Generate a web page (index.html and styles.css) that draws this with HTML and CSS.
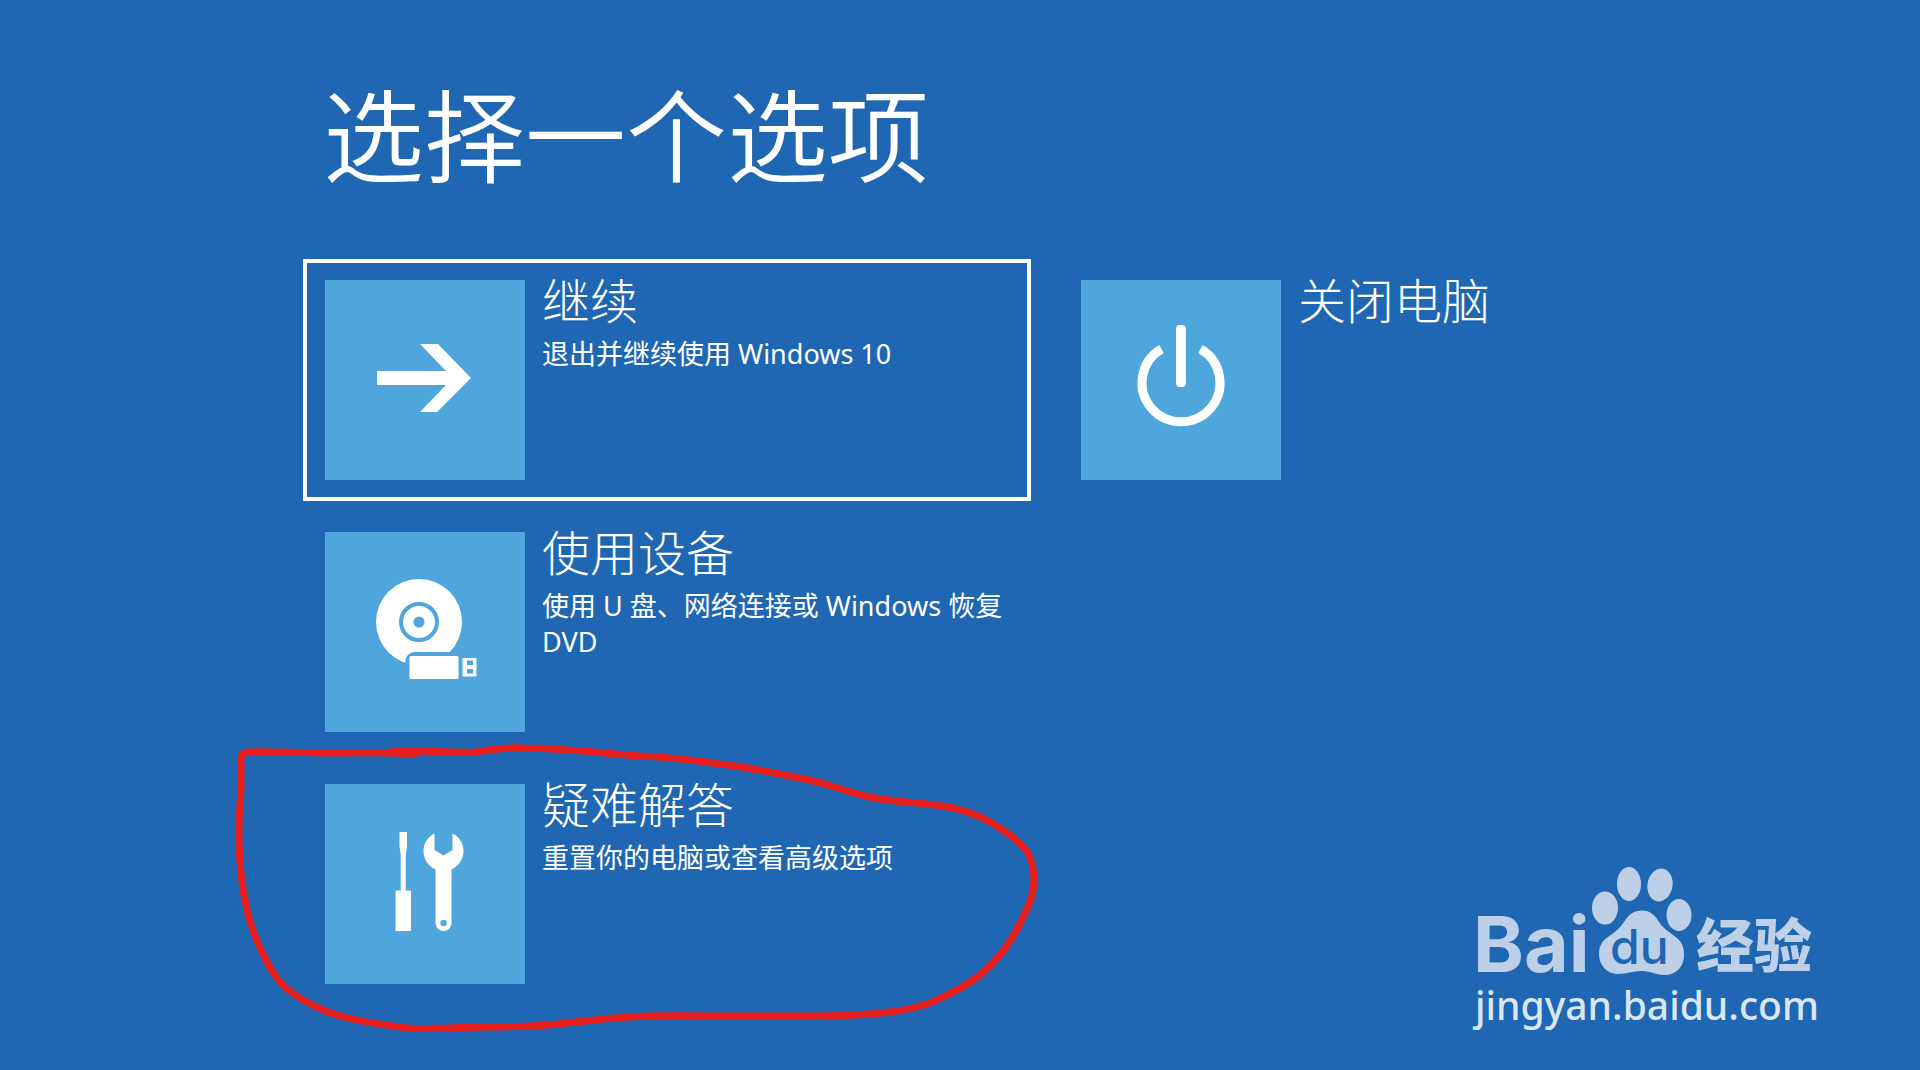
FILE: index.html
```html
<!DOCTYPE html>
<html lang="zh-CN">
<head>
    <meta charset="UTF-8">
    <meta name="viewport" content="width=device-width, initial-scale=1.0">
    <title>选择一个选项</title>
    <link rel="stylesheet" href="styles.css">
</head>
<body>

<main class="container">
    <h1>选择一个选项</h1>

    <div class="options">
        <div class="column">
            <button type="button" class="option selected">
                <svg class="tile" viewBox="0 0 200 200" aria-hidden="true">
                    <path class="shape" d="M52 91H121L95 64H113L146 98L112 132H95L121 105H52Z"/>
                </svg>
                <span class="text">
                    <span class="name">继续</span>
                    <span class="detail">退出并继续使用 Windows 10</span>
                </span>
            </button>

            <button type="button" class="option">
                <svg class="tile" viewBox="0 0 200 200" aria-hidden="true">
                    <circle class="shape" cx="94" cy="90" r="43"/>
                    <circle class="ring" cx="94" cy="90" r="18"/>
                    <circle class="hole" cx="94" cy="90" r="5.5"/>
                    <rect class="hole" x="80.5" y="120" width="70" height="40" rx="9"/>
                    <rect class="shape" x="84.5" y="124" width="49" height="23" rx="1.5"/>
                    <rect class="shape" x="137.5" y="126" width="14" height="18.5" rx="0.5"/>
                    <rect class="hole" x="142" y="128.5" width="6" height="4.5"/>
                    <rect class="hole" x="142" y="137" width="6" height="4.5"/>
                </svg>
                <span class="text">
                    <span class="name">使用设备</span>
                    <span class="detail">使用 U 盘、网络连接或 Windows 恢复 DVD</span>
                </span>
            </button>

            <div class="marked">
                <button type="button" class="option">
                    <svg class="tile" viewBox="0 0 200 200" aria-hidden="true">
                        <path class="shape" d="M74.5 48H82V62L80.7 71V106.5H85Q86 106.5 86 107.5V146Q86 147 85 147H71.5Q70.5 147 70.5 146V107.5Q70.5 106.5 71.5 106.5H75.7V71L74.5 62Z"/>
                        <path class="shape" d="M109.5 49.5V66L118.5 71.5L127.5 66V49.5C134 52.5 138.5 59 138.5 67C138.5 75 134 82 126.5 85.5V139A8 8 0 0 1 110.5 139V85.5C103 82 98.5 75 98.5 67C98.5 59 103 52.5 109.5 49.5Z"/>
                        <circle class="hole" cx="118.5" cy="139" r="3.2"/>
                    </svg>
                    <span class="text">
                        <span class="name">疑难解答</span>
                        <span class="detail">重置你的电脑或查看高级选项</span>
                    </span>
                </button>
                <!-- hand drawn circle around the option -->
                <svg class="marker" viewBox="230 730 820 310" aria-hidden="true">
                    <path d="M415 754C385 752 350 753 330 753C300 753 265 751 248 752Q241 752 241 760C241 772 241 785 241 790C239 810 239 825 239 837C239 862 242 888 247 910C252 932 264 960 277 978C288 993 306 1002 323 1010C347 1020 378 1024 407 1028C420 1029 434 1028 447 1028C480 1026 515 1028 547 1025C575 1023 602 1018 630 1017C655 1015 680 1016 707 1016C740 1016 775 1016 807 1016C832 1016 857 1016 880 1013C905 1011 927 1006 947 995C966 986 980 977 993 963C1005 950 1016 933 1023 917C1029 906 1034 892 1034 880C1034 870 1032 861 1028 853C1019 840 1004 830 990 822C978 815 966 811 953 808C926 802 898 803 870 797C846 792 824 782 800 778C774 773 747 767 720 764C693 760 667 757 640 756C600 753 562 748 523 748C505 747 488 750 475 752C450 753 420 750 393 751"/>
                </svg>
            </div>
        </div>

        <div class="column">
            <button type="button" class="option">
                <svg class="tile" viewBox="0 0 200 200" aria-hidden="true">
                    <path class="power" d="M80.5 69A39 39 0 1 0 119.5 69"/>
                    <rect class="shape" x="95" y="45" width="10" height="62" rx="4"/>
                </svg>
                <span class="text">
                    <span class="name">关闭电脑</span>
                </span>
            </button>
        </div>
    </div>
</main>

<div class="watermark">
    <svg class="logo" viewBox="0 0 350 118">
        <text class="bai" x="3" y="112">Bai</text>
        <ellipse cx="135" cy="48" rx="13" ry="16.5"/>
        <ellipse cx="159" cy="24" rx="12" ry="17"/>
        <ellipse cx="190" cy="25" rx="12.5" ry="16.5" transform="rotate(10 190 25)"/>
        <ellipse cx="209" cy="55" rx="12.5" ry="16"/>
        <path d="M172 50.5C180 50.5 185 55 189 62C194 70 203 74 209 80C213 85 214 89 214 95C214 107 206 115 195 115C186 115 181 111 172 111C163 111 157 114 148 114C137 114 129 105 129 94C129 86 132 81 138 77C145 72 150 68 154 62C159 54 164 50.5 172 50.5Z"/>
        <text class="du" x="140" y="104">du</text>
        <text class="jingyan" x="226" y="107">经验</text>
    </svg>
    <span class="address">jingyan.baidu.com</span>
</div>

</body>
</html>
```

FILE: styles.css
```css
/* Global Styles */
* {
    margin: 0;
    padding: 0;
    box-sizing: border-box;
}

body {
    font-family: 'Noto Sans', 'Noto Sans CJK SC', sans-serif;
    background-color: #1f67b2;
    color: white;
    min-height: 100vh;
    position: relative;
}

.container {
    padding: 71px 100px 0 303px;
}

h1 {
    font-family: 'Noto Sans CJK SC', sans-serif;
    font-size: 101px;
    font-weight: 350;
    line-height: 120px;
    margin: 0 0 68px 20px;
}

/* Options */
.options {
    display: grid;
    grid-template-columns: repeat(2, minmax(0, 728px));
    gap: 28px;
}

.column {
    display: flex;
    flex-direction: column;
    gap: 10px;
}

.option {
    display: flex;
    gap: 17px;
    width: 100%;
    padding: 17px 18px;
    border: 4px solid transparent;
    background: none;
    color: white;
    font-family: inherit;
    text-align: left;
    cursor: pointer;
}

.option.selected {
    border-color: white;
}

.text {
    display: flex;
    flex-direction: column;
    min-width: 0;
}

.name {
    font-family: 'Noto Sans CJK SC', sans-serif;
    font-size: 48px;
    font-weight: 300;
    line-height: 36px;
    margin-bottom: 20px;
}

.detail {
    font-size: 27px;
    line-height: 36px;
}

/* Icons */
.tile {
    width: 200px;
    height: 200px;
    flex-shrink: 0;
    background-color: #4ea6dc;
}

.shape {
    fill: white;
}

.hole {
    fill: #4ea6dc;
}

.ring {
    fill: none;
    stroke: #4ea6dc;
    stroke-width: 4;
}

.power {
    fill: none;
    stroke: white;
    stroke-width: 9;
}

/* Red marker */
.marked {
    position: relative;
}

.marker {
    position: absolute;
    left: -73px;
    top: -33px;
    width: 820px;
    height: 310px;
    pointer-events: none;
}

.marker path {
    fill: none;
    stroke: #e71d1c;
    stroke-width: 7;
    stroke-linecap: round;
    stroke-linejoin: round;
}

/* Watermark */
.watermark {
    position: absolute;
    right: 100px;
    bottom: 38px;
    width: 350px;
}

.logo {
    display: block;
    width: 100%;
    overflow: visible;
    fill: #bdd0e8;
}

.bai {
    font-family: Inter, sans-serif;
    font-size: 77px;
    font-weight: 700;
}

.du {
    font-family: Inter, sans-serif;
    font-size: 48px;
    font-weight: 500;
    fill: #1f67b2;
}

.jingyan {
    font-family: 'Noto Sans CJK SC', sans-serif;
    font-size: 58px;
    font-weight: 900;
}

.address {
    display: block;
    padding-left: 5px;
    color: #dae6f3;
    font-size: 39px;
    font-weight: 500;
    line-height: 54px;
}
```
